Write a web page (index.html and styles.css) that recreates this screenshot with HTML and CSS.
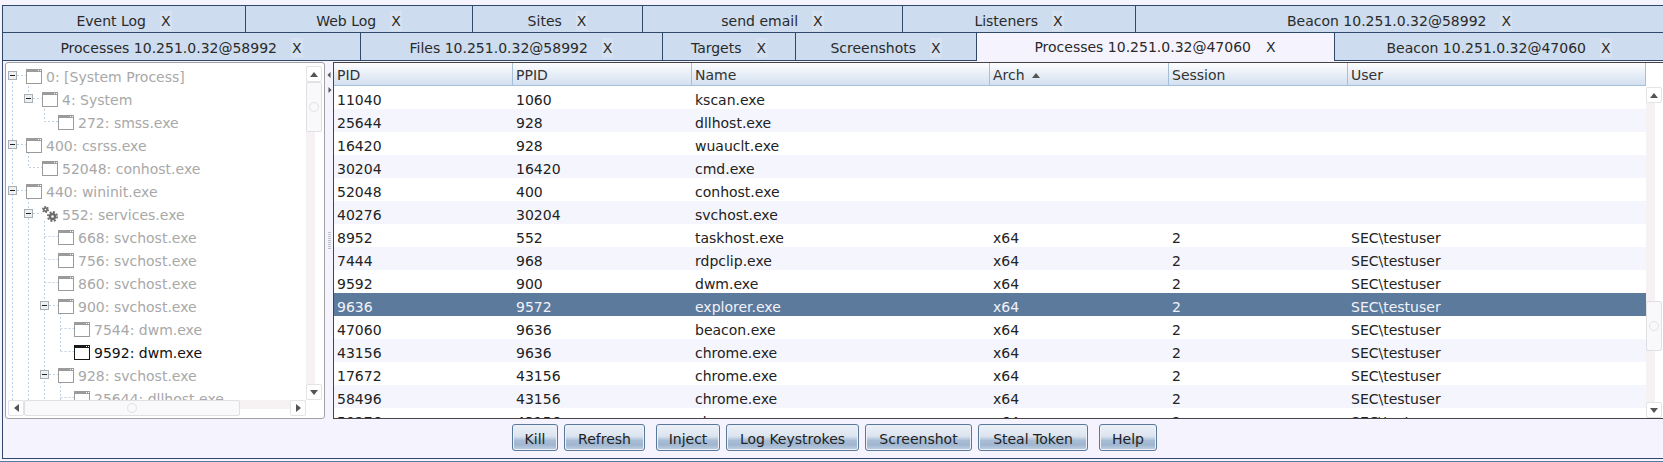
FILE: index.html
```html
<!DOCTYPE html>
<html lang="en">
<head>
<meta charset="utf-8">
<title>Processes</title>
<link rel="stylesheet" href="styles.css">
</head>
<body>
<svg class="defs" width="0" height="0" aria-hidden="true">
  <symbol id="win" viewBox="0 0 16 16">
    <rect x="0.5" y="1.5" width="15" height="14" fill="#fff" stroke="currentColor"/>
    <rect x="0" y="1" width="16" height="3" fill="currentColor"/>
    <rect x="12" y="2" width="1" height="1" fill="#fff"/><rect x="14" y="2" width="1" height="1" fill="#fff"/>
  </symbol>
  <symbol id="exp" viewBox="0 0 9 9">
    <rect x="0.5" y="0.5" width="8" height="8" fill="#eef0f2" stroke="#a9aeb4"/>
    <rect x="2" y="4" width="5" height="1" fill="#222"/>
  </symbol>
</svg>
<div class="app">
  <div class="tabs row-a">
    <div class="tab"><span>Event Log</span><span class="x">X</span></div>
    <div class="tab"><span>Web Log</span><span class="x">X</span></div>
    <div class="tab"><span>Sites</span><span class="x">X</span></div>
    <div class="tab"><span>send email</span><span class="x">X</span></div>
    <div class="tab"><span>Listeners</span><span class="x">X</span></div>
    <div class="tab"><span>Beacon 10.251.0.32@58992</span><span class="x">X</span></div>
  </div>
  <div class="tabs row-b">
    <div class="tab"><span>Processes 10.251.0.32@58992</span><span class="x">X</span></div>
    <div class="tab"><span>Files 10.251.0.32@58992</span><span class="x">X</span></div>
    <div class="tab"><span>Targets</span><span class="x">X</span></div>
    <div class="tab"><span>Screenshots</span><span class="x">X</span></div>
    <div class="tab active"><span>Processes 10.251.0.32@47060</span><span class="x">X</span></div>
    <div class="tab"><span>Beacon 10.251.0.32@47060</span><span class="x">X</span></div>
  </div>
  <div class="content">
    <div class="split">
      <div class="tree">
        <div class="tree-view">
          <svg class="guides" width="300" height="340" aria-hidden="true">
            <g stroke="#bdd0e4" stroke-dasharray="2 2" fill="none">
              <path d="M5.500 18V340"/>
              <path d="M21.500 18V28M21.500 88V103.500H35M21.500 134V340"/>
              <path d="M37.500 41V57.500H51M37.500 157V340"/>
              <path d="M53.500 249V287.500M53.500 318V340"/>
              <path d="M10 11.500h9M10 80.500h9M10 126.500h9"/>
              <path d="M26 34.500h9M26 149.500h9"/>
              <path d="M42 241.500h9M42 310.500h9"/>
              <path d="M37.500 172.500H51M37.500 195.500H51M37.500 218.500H51"/>
              <path d="M53.500 264.500H67M53.500 287.500H67M53.500 333.500H67"/>
            </g>
          </svg>
          <div class="node l0"><svg class="exp"><use href="#exp"/></svg><svg class="ico"><use href="#win"/></svg><span>0: [System Process]</span></div>
          <div class="node l1"><svg class="exp"><use href="#exp"/></svg><svg class="ico"><use href="#win"/></svg><span>4: System</span></div>
          <div class="node l2"><svg class="ico"><use href="#win"/></svg><span>272: smss.exe</span></div>
          <div class="node l0"><svg class="exp"><use href="#exp"/></svg><svg class="ico"><use href="#win"/></svg><span>400: csrss.exe</span></div>
          <div class="node l1 leaf"><svg class="ico"><use href="#win"/></svg><span>52048: conhost.exe</span></div>
          <div class="node l0"><svg class="exp"><use href="#exp"/></svg><svg class="ico"><use href="#win"/></svg><span>440: wininit.exe</span></div>
          <div class="node l1"><svg class="exp"><use href="#exp"/></svg>
            <svg class="ico gear" viewBox="0 0 16 16">
              <g fill="none" stroke="#6a6a6a">
                <circle cx="3.500" cy="3.500" r="1.700" stroke-width="1.700"/>
                <circle cx="3.500" cy="3.500" r="3" stroke-width="1.200" stroke-dasharray="1.600 1.540"/>
                <circle cx="10.500" cy="10.500" r="2.500" stroke-width="2.400"/>
                <circle cx="10.500" cy="10.500" r="4.600" stroke-width="1.700" stroke-dasharray="2 1.610"/>
              </g>
            </svg>
            <span>552: services.exe</span></div>
          <div class="node l2"><svg class="ico"><use href="#win"/></svg><span>668: svchost.exe</span></div>
          <div class="node l2"><svg class="ico"><use href="#win"/></svg><span>756: svchost.exe</span></div>
          <div class="node l2"><svg class="ico"><use href="#win"/></svg><span>860: svchost.exe</span></div>
          <div class="node l2 parent"><svg class="exp"><use href="#exp"/></svg><svg class="ico"><use href="#win"/></svg><span>900: svchost.exe</span></div>
          <div class="node l3"><svg class="ico"><use href="#win"/></svg><span>7544: dwm.exe</span></div>
          <div class="node l3 live"><svg class="ico"><use href="#win"/></svg><span>9592: dwm.exe</span></div>
          <div class="node l2 parent"><svg class="exp"><use href="#exp"/></svg><svg class="ico"><use href="#win"/></svg><span>928: svchost.exe</span></div>
          <div class="node l3"><svg class="ico"><use href="#win"/></svg><span>25644: dllhost.exe</span></div>
        </div>
        <div class="vbar treebar">
          <div class="sbtn"><svg width="8" height="5"><path d="M0 5L4 0L8 5Z"/></svg></div>
          <div class="thumb vthumb"><i></i></div>
          <div class="track"></div>
          <div class="sbtn"><svg width="8" height="5"><path d="M0 0L8 0L4 5Z"/></svg></div>
        </div>
        <div class="hbar">
          <div class="sbtn"><svg width="5" height="8"><path d="M5 0V8L0 4Z"/></svg></div>
          <div class="thumb hthumb"><i></i></div>
          <div class="track"></div>
          <div class="sbtn"><svg width="5" height="8"><path d="M0 0V8L5 4Z"/></svg></div>
        </div>
        <div class="corner"></div>
      </div>
      <div class="divider">
        <svg class="arrows" width="5" height="24"><path d="M3.500 0V6L0.500 3Z"/><path d="M1.500 15V21L4.500 18Z"/></svg>
        <div class="grip"></div>
      </div>
      <div class="grid-panel">
        <div class="grid-view">
          <table class="procs">
            <thead><tr><th>PID</th><th>PPID</th><th>Name</th><th>Arch <svg class="sort" width="8" height="5"><path d="M0 5L4 0L8 5Z"/></svg></th><th>Session</th><th>User</th></tr></thead>
            <tbody>
              <tr><td>11040</td><td>1060</td><td>kscan.exe</td><td></td><td></td><td></td></tr>
              <tr><td>25644</td><td>928</td><td>dllhost.exe</td><td></td><td></td><td></td></tr>
              <tr><td>16420</td><td>928</td><td>wuauclt.exe</td><td></td><td></td><td></td></tr>
              <tr><td>30204</td><td>16420</td><td>cmd.exe</td><td></td><td></td><td></td></tr>
              <tr><td>52048</td><td>400</td><td>conhost.exe</td><td></td><td></td><td></td></tr>
              <tr><td>40276</td><td>30204</td><td>svchost.exe</td><td></td><td></td><td></td></tr>
              <tr><td>8952</td><td>552</td><td>taskhost.exe</td><td>x64</td><td>2</td><td>SEC\testuser</td></tr>
              <tr><td>7444</td><td>968</td><td>rdpclip.exe</td><td>x64</td><td>2</td><td>SEC\testuser</td></tr>
              <tr><td>9592</td><td>900</td><td>dwm.exe</td><td>x64</td><td>2</td><td>SEC\testuser</td></tr>
              <tr class="sel"><td>9636</td><td>9572</td><td>explorer.exe</td><td>x64</td><td>2</td><td>SEC\testuser</td></tr>
              <tr><td>47060</td><td>9636</td><td>beacon.exe</td><td>x64</td><td>2</td><td>SEC\testuser</td></tr>
              <tr><td>43156</td><td>9636</td><td>chrome.exe</td><td>x64</td><td>2</td><td>SEC\testuser</td></tr>
              <tr><td>17672</td><td>43156</td><td>chrome.exe</td><td>x64</td><td>2</td><td>SEC\testuser</td></tr>
              <tr><td>58496</td><td>43156</td><td>chrome.exe</td><td>x64</td><td>2</td><td>SEC\testuser</td></tr>
              <tr><td>50276</td><td>43156</td><td>chrome.exe</td><td>x64</td><td>2</td><td>SEC\testuser</td></tr>
            </tbody>
          </table>
        </div>
        <div class="vbar tablebar">
          <div class="bar-head"></div>
          <div class="sbtn"><svg width="8" height="5"><path d="M0 5L4 0L8 5Z"/></svg></div>
          <div class="track long"></div>
          <div class="thumb vthumb"><i></i></div>
          <div class="track"></div>
          <div class="sbtn"><svg width="8" height="5"><path d="M0 0L8 0L4 5Z"/></svg></div>
        </div>
      </div>
    </div>
    <div class="actions">
      <button class="btn">Kill</button>
      <button class="btn">Refresh</button>
      <button class="btn wide-gap">Inject</button>
      <button class="btn">Log Keystrokes</button>
      <button class="btn">Screenshot</button>
      <button class="btn">Steal Token</button>
      <button class="btn wide-gap">Help</button>
    </div>
  </div>
  <div class="stripe"></div>
</div>
</body>
</html>
```
FILE: styles.css
```css
* { box-sizing: border-box; }
html, body { margin: 0; height: 462px; overflow: hidden; background: #f5f3fe; }
body { font: 14px/1 "DejaVu Sans", sans-serif; color: #222; }
.defs { position: absolute; }
.app { height: 462px; padding: 5px 0 0 2px; display: flex; flex-direction: column; }

.tabs { display: grid; height: 28px; flex: none; }
.row-a { grid-template-columns: 244px 227px 170px 260px 233px 1fr; }
.row-b { grid-template-columns: 359px 302px 133px 181px 358px 1fr; }
.tab { display: flex; align-items: center; justify-content: center; gap: 14px; padding-top: 2px; background: #cddcee; border: 1px solid #30496b; border-left-width: 0; color: #2a2a2a; }
.row-a .tab { padding-top: 3px; }
.row-b .tab { border-top-width: 0; }
.tab:first-child { border-left-width: 1px; }
.tab:last-child { border-right-width: 0; }
.tab.active { background: #f5f3fe; border-bottom-width: 0; padding-top: 0; }
.x { background: #d6e2f1; padding: 3px 1px; }
.tab.active .x { background: none; }

.content { height: 398px; flex: none; display: flex; flex-direction: column; border-left: 1px solid #30496b; border-bottom: 1px solid #30496b; padding: 1px 0 0 2px; }
.split { height: 357px; display: flex; flex: none; }

.tree { width: 320px; flex: none; display: grid; grid-template-columns: 1fr 16px; grid-template-rows: 1fr 16px; background: #fff; border: 1px solid #a2a2a2; border-radius: 3px; padding: 1px 2px 2px 1px; }
.tree-view { position: relative; overflow: hidden; min-height: 0; color: #a8a8a8; }
.guides { position: absolute; left: 0; top: 0; }
.node { position: relative; height: 23px; display: flex; align-items: center; white-space: nowrap; }
.node span { margin-left: 4px; padding-top: 2px; }
.l0 { padding-left: 1px; }
.l1 { padding-left: 17px; }
.l1.leaf { padding-left: 35px; }
.l2 { padding-left: 51px; }
.l2.parent { padding-left: 33px; }
.l3 { padding-left: 67px; }
.exp { width: 9px; height: 9px; margin-right: 9px; flex: none; }
.ico { width: 16px; height: 16px; flex: none; color: #9b9b9b; }
.live { color: #111; }
.live .ico { color: #1a1a1a; }

.vbar { display: flex; flex-direction: column; background: linear-gradient(90deg, #f6f1f3 55%, #fff 55%); min-height: 0; }
.treebar { margin-top: 2px; }
.hbar { display: flex; margin-left: 1px; background: linear-gradient(#f6f1f3 55%, #fff 55%); min-width: 0; }
.track { flex: 1; }
.corner { background: #fff; }
.sbtn { width: 16px; height: 16px; flex: none; display: flex; align-items: center; justify-content: center; background: #fff; border: 1px solid #e4e3e6; border-radius: 2px; }
.sbtn path { fill: #555; }
.thumb { flex: none; display: flex; align-items: center; justify-content: center; background: #f9f8fa; border: 1px solid #e0dfe4; border-radius: 2px; }
.thumb i { display: block; width: 10px; height: 10px; border: 1px solid #e2e1e5; border-radius: 50%; }
.vthumb { height: 50px; }
.hthumb { width: 216px; }

.divider { width: 8px; flex: none; display: flex; flex-direction: column; align-items: center; padding-top: 10px; }
.arrows path { fill: #555; }
.grip { width: 3px; height: 17px; margin-top: 136px; background: repeating-linear-gradient(#b9c0c9 0 1px, transparent 1px 2px); }

.grid-panel { flex: 1; min-width: 0; display: flex; border: 1px solid #444; border-width: 1px 0 1px 1px; background: #fff; }
.grid-view { width: 1312px; flex: none; overflow: hidden; }
.procs { width: 1312px; table-layout: fixed; border-collapse: separate; border-spacing: 0; }
.procs th { height: 23px; padding: 2px 3px 0; text-align: left; font-weight: 400; color: #333; background: linear-gradient(#fdfdff 0%, #eaf0f8 45%, #d3e0f0 100%); border-right: 1px solid #a6c0da; border-bottom: 1px solid #a6c0da; }
.procs th:nth-child(1), .procs th:nth-child(2), .procs th:nth-child(4), .procs th:nth-child(5) { width: 179px; }
.procs th:nth-child(3) { width: 298px; }
.sort { margin-left: 3px; vertical-align: 2px; }
.sort path { fill: #555; }
.procs td { height: 23px; padding: 4px 3px 0; white-space: nowrap; overflow: hidden; color: #222; }
.procs tbody tr:nth-child(even) td { background: #f5f5fd; }
.procs tbody tr.sel td { background: #5c7a9c; color: #f2f2fa; }

.tablebar { width: 16px; flex: none; }
.bar-head { height: 24px; flex: none; background: #fff; }
.tablebar .long { flex: 0 0 198px; }

.actions { flex: 1; display: grid; grid-template-columns: 46px 81px 69px 133px 107px 110px 63px; justify-content: start; align-items: start; padding: 5px 0 0 507px; gap: 6px; }
.btn { height: 27px; padding: 2px 0 0; font: 14px "DejaVu Sans", sans-serif; color: #222; border: 1px solid #5a7899; border-radius: 3px; box-shadow: inset 0 0 0 1px #eef2f8; background: linear-gradient(#edf1f7 0%, #dbe4ef 45%, #a8bdd5 62%, #a0b6d0 80%, #c4d2e3 100%); }
.wide-gap { margin-left: 5px; }
.stripe { height: 1px; margin-top: 2px; margin-left: -2px; background: #5a7ba0; flex: none; }
```
